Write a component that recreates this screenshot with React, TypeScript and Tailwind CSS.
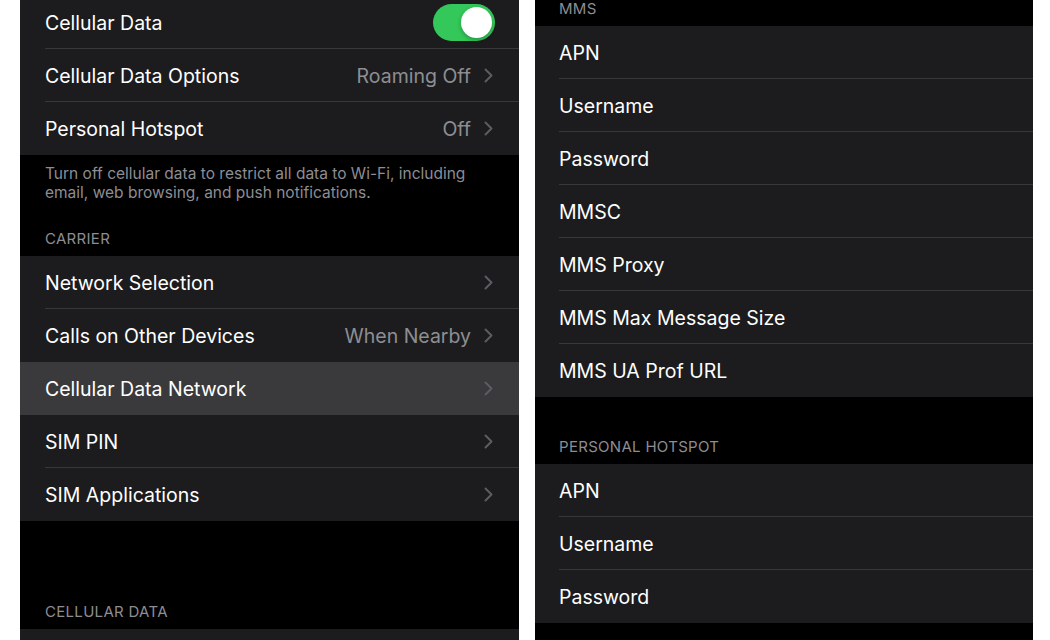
import React from "react";

type Row = {
  label: string;
  value?: string;
  chevron?: boolean;
  toggle?: boolean;
  active?: boolean;
};

const font = { fontFamily: "Inter, 'Noto Sans', 'Liberation Sans', sans-serif" };

function Chevron() {
  return (
    <svg width="9" height="15" viewBox="0 0 9 15" className="ml-[13px] shrink-0">
      <path d="M1.5 1.5 L7.5 7.5 L1.5 13.5" fill="none" stroke="#5c5c61" strokeWidth="2" strokeLinecap="round" strokeLinejoin="round" />
    </svg>
  );
}

function Toggle() {
  return (
    <div className="w-[62px] h-[37px] rounded-full bg-[#34c759] flex items-center justify-end pr-[3px]">
      <div className="w-[31px] h-[31px] rounded-full bg-white shadow-[0_2px_4px_rgba(0,0,0,0.25)]" />
    </div>
  );
}

function Group({ rows, inset = "pl-[25px]" }: { rows: Row[]; inset?: string }) {
  return (
    <div className="bg-[#1c1c1e]">
      {rows.map((r, i) => (
        <div key={i} className={`flex h-[53px] ${inset} ${r.active ? "bg-[#3a3a3c]" : ""}`}>
          <div
            className={`flex flex-1 items-center ${r.toggle ? "pr-[24px]" : "pr-[26px]"} ${
              i < rows.length - 1 && !r.active && !rows[i + 1]?.active ? "border-b border-[#38383a]" : ""
            }`}
          >
            <span className="flex-1 pt-[3px] text-[19.5px] text-white">{r.label}</span>
            {r.value && <span className="pt-[3px] text-[19.5px] text-[#8e8e93]">{r.value}</span>}
            {r.chevron && <Chevron />}
            {r.toggle && <Toggle />}
          </div>
        </div>
      ))}
    </div>
  );
}

function Header({ text, className = "" }: { text: string; className?: string }) {
  return (
    <div className={`pb-[8px] text-[15px] leading-[18px] tracking-[0.3px] text-[#8d8d93] ${className}`}>{text}</div>
  );
}

export default function App() {
  return (
    <div className="w-[1050px] h-[640px] overflow-hidden bg-white flex" style={font}>
      {/* Cellular settings */}
      <div className="ml-[20px] w-[499px] h-[640px] bg-black overflow-hidden">
        <div className="-mt-[4px]">
          <Group
            rows={[
              { label: "Cellular Data", toggle: true },
              { label: "Cellular Data Options", value: "Roaming Off", chevron: true },
              { label: "Personal Hotspot", value: "Off", chevron: true },
            ]}
          />
        </div>
        <p className="pl-[25px] pr-[30px] pt-[9px] text-[15.5px] leading-[19px] text-[#8d8d93]">
          Turn off cellular data to restrict all data to Wi-Fi, including email, web browsing, and push notifications.
        </p>
        <Header text="CARRIER" className="mt-[28px] pl-[25px]" />
        <Group
          rows={[
            { label: "Network Selection", chevron: true },
            { label: "Calls on Other Devices", value: "When Nearby", chevron: true },
            { label: "Cellular Data Network", chevron: true, active: true },
            { label: "SIM PIN", chevron: true },
            { label: "SIM Applications", chevron: true },
          ]}
        />
        <Header text="CELLULAR DATA" className="mt-[82px] pl-[25px]" />
        <div className="bg-[#1c1c1e] h-[53px]" />
      </div>

      {/* Cellular data network settings */}
      <div className="ml-[16px] w-[498px] h-[640px] bg-black overflow-hidden">
        <Header text="MMS" className="pl-[24px]" />
        <Group
          inset="pl-[24px]"
          rows={[
            { label: "APN" },
            { label: "Username" },
            { label: "Password" },
            { label: "MMSC" },
            { label: "MMS Proxy" },
            { label: "MMS Max Message Size" },
            { label: "MMS UA Prof URL" },
          ]}
        />
        <Header text="PERSONAL HOTSPOT" className="mt-[41px] pl-[24px]" />
        <Group inset="pl-[24px]" rows={[{ label: "APN" }, { label: "Username" }, { label: "Password" }]} />
      </div>
    </div>
  );
}
